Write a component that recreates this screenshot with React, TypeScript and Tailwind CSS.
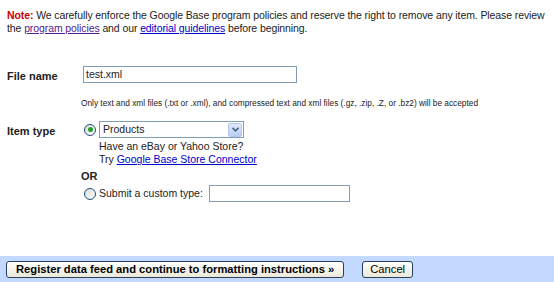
export default function App() {
  return (
    <div className="w-[554px] h-[282px] bg-white flex flex-col font-['Liberation_Sans',Arial,sans-serif] text-[11px] text-[#222] overflow-hidden">
      <div className="flex-1 flex flex-col">
        <p className="pl-[7px] pt-[9px] leading-[13px] text-[10.5px] tracking-[-0.1px] whitespace-nowrap">
          <span className="text-[#cc0000] font-bold">Note:</span> We carefully enforce the Google Base program policies and reserve the right to remove any item. Please review
          <br />
          the <a className="text-[#551a8b] underline">program policies</a> and our{' '}
          <a className="text-[#0000cc] underline">editorial guidelines</a> before beginning.
        </p>

        <div className="flex mt-[31px]">
          <div className="w-[83px] pl-[7px] pt-[2px] font-bold text-[11px]">File name</div>
          <div className="flex flex-col">
            <div className="w-[214px] h-[17px] border border-[#7f9db9] text-[10.5px] leading-[15px] pl-[2px]">test.xml</div>
            <p className="mt-[15px] -ml-[2px] text-[8.3px] leading-[10px] text-[#222] whitespace-nowrap">
              Only text and xml files (.txt or .xml), and compressed text and xml files (.gz, .zip, .Z, or .bz2) will be accepted
            </p>
          </div>
        </div>

        <div className="flex mt-[13px]">
          <div className="w-[83px] pl-[7px] pt-[2px] font-bold text-[11px]">Item type</div>
          <div className="flex flex-col text-[10.5px]">
            <div className="flex items-center gap-[3px] pl-[1px]">
              <Radio checked />
              <div className="w-[145px] h-[17px] border border-[#7f9db9] flex items-center justify-between pl-[3px] pr-[1px]">
                <span className="leading-[15px]">Products</span>
                <span className="w-[14px] h-[14px] rounded-[2px] bg-gradient-to-b from-[#e0e9fb] to-[#b9cdf5] border border-[#b4c6ec] flex items-center justify-center">
                  <svg width="7" height="5" viewBox="0 0 7 5"><path d="M0.5 0.8 L3.5 3.8 L6.5 0.8" stroke="#4d6185" strokeWidth="1.6" fill="none" /></svg>
                </span>
              </div>
            </div>
            <div className="pl-[16px] leading-[13px] mt-[2px]">Have an eBay or Yahoo Store?</div>
            <div className="pl-[16px] leading-[13px]">
              Try <a className="text-[#0000cc] underline">Google Base Store Connector</a>
            </div>
            <div className="font-bold text-[11px] leading-[14px] mt-[3px] -ml-[2px]">OR</div>
            <div className="flex items-center pl-[1px] mt-[2px]">
              <Radio />
              <span className="ml-[3px]">Submit a custom type:</span>
              <div className="ml-[6px] w-[141px] h-[17px] border border-[#7f9db9]" />
            </div>
          </div>
        </div>
      </div>

      <div className="h-[26px] bg-[#c3d9ff] flex items-center gap-[18px] pl-[6px]">
        <button className="h-[17px] px-[9px] border border-[#2b3f5f] rounded-[3px] bg-gradient-to-b from-white to-[#ece9d8] text-[11.2px] leading-[15px] font-bold text-black whitespace-nowrap">
          Register data feed and continue to formatting instructions »
        </button>
        <button className="h-[17px] px-[7px] border border-[#2b3f5f] rounded-[3px] bg-gradient-to-b from-white to-[#ece9d8] text-[11.2px] leading-[15px] text-black">
          Cancel
        </button>
      </div>
    </div>
  )
}

function Radio({ checked = false }: { checked?: boolean }) {
  return (
    <span className="w-[12px] h-[12px] rounded-full border border-[#1c5180] bg-gradient-to-br from-[#dcdcd6] to-white flex items-center justify-center">
      {checked && <span className="w-[5px] h-[5px] rounded-full bg-[#21a121]" />}
    </span>
  )
}
